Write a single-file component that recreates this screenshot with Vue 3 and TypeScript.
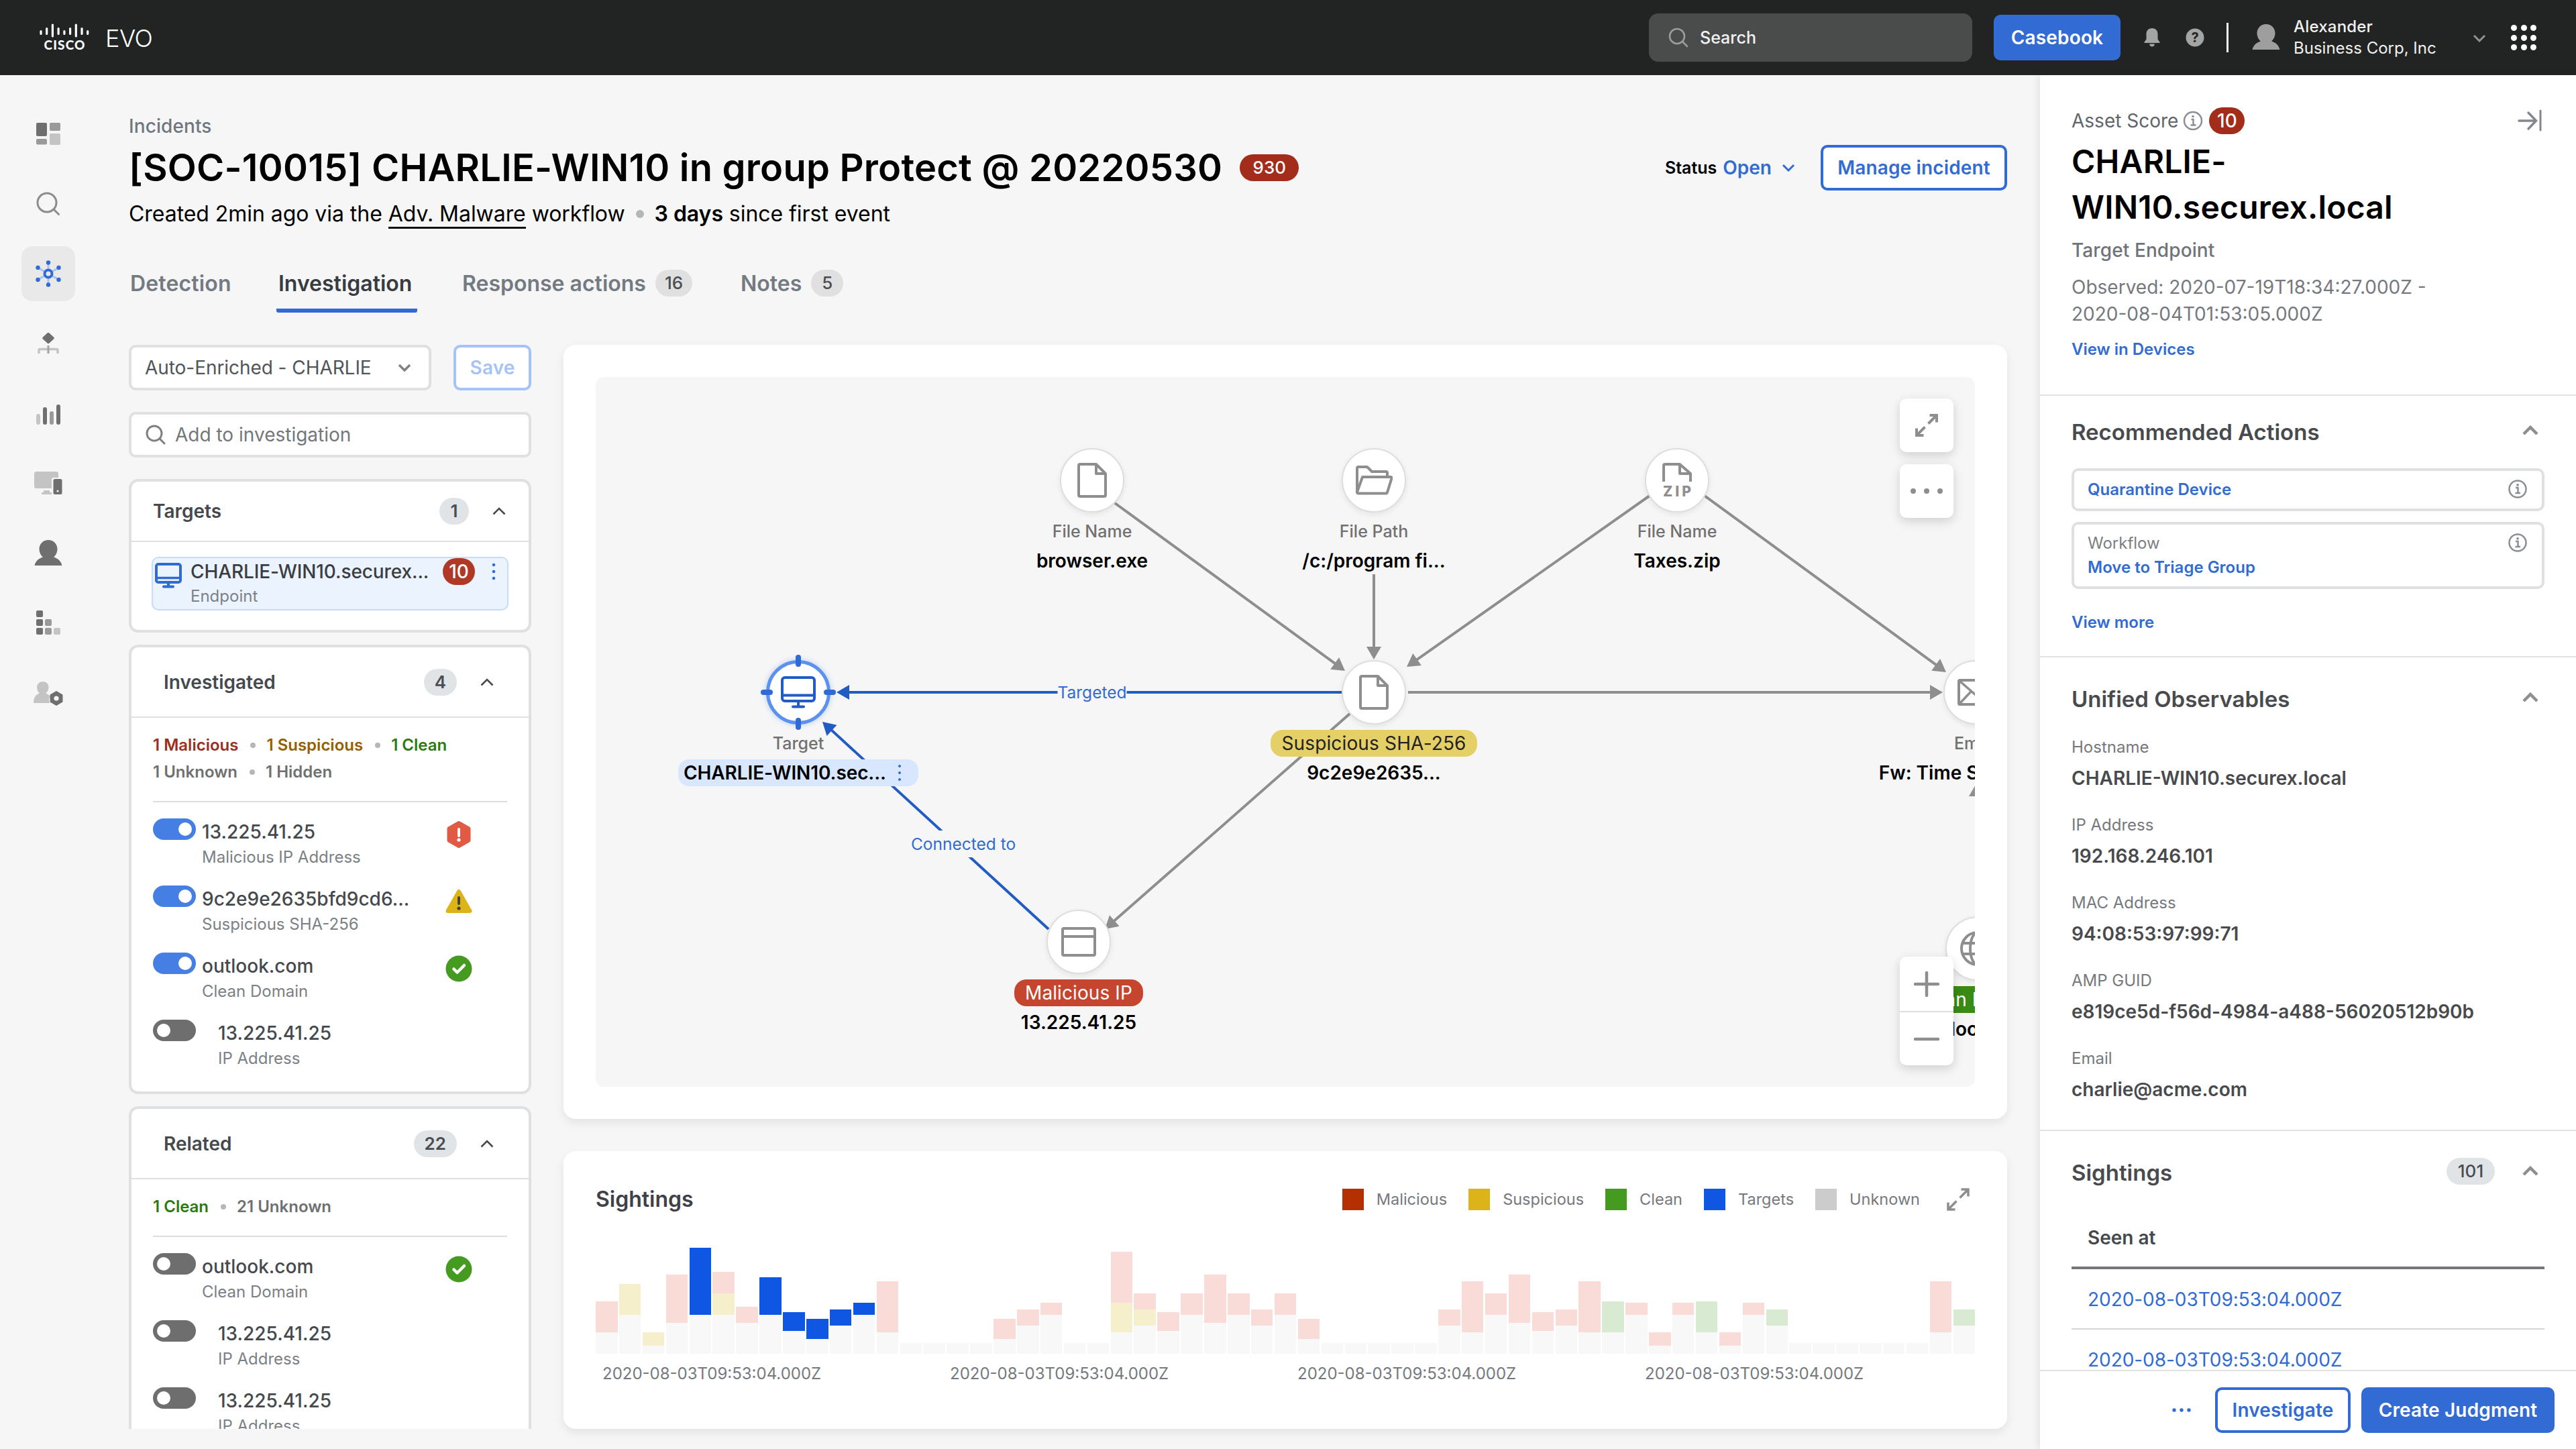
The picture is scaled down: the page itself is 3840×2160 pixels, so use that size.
<script setup lang="ts">
type Tone = 'malicious' | 'suspicious' | 'clean' | 'unknown'

interface Observable {
  on: boolean
  value: string
  kind: string
  verdict?: Tone
}

interface Segment {
  color: string
  size: number
}

interface GraphNode {
  id: string
  x: number
  y: number
  icon: string
  label: string
  name: string
  pill?: Tone
}

interface Edge {
  x1: number
  y1: number
  x2: number
  y2: number
  color: string
}

const tabs = [
  { label: 'Detection', cls: 't-detection' },
  { label: 'Investigation', cls: 't-investigation', active: true },
  { label: 'Response actions', cls: 't-response', count: 16 },
  { label: 'Notes', cls: 't-notes', count: 5 },
]

const investigated: Observable[] = [
  { on: true, value: '13.225.41.25', kind: 'Malicious IP Address', verdict: 'malicious' },
  { on: true, value: '9c2e9e2635bfd9cd6...', kind: 'Suspicious SHA-256', verdict: 'suspicious' },
  { on: true, value: 'outlook.com', kind: 'Clean Domain', verdict: 'clean' },
  { on: false, value: '13.225.41.25', kind: 'IP Address' },
]

const related: Observable[] = [
  { on: false, value: 'outlook.com', kind: 'Clean Domain', verdict: 'clean' },
  { on: false, value: '13.225.41.25', kind: 'IP Address' },
  { on: false, value: '13.225.41.25', kind: 'IP Address' },
]

const groups: { title: string; count: number; stats: { text: string; tone: Tone }[][]; items: Observable[] }[] = [
  {
    title: 'Investigated',
    count: 4,
    stats: [
      [
        { text: '1 Malicious', tone: 'malicious' },
        { text: '1 Suspicious', tone: 'suspicious' },
        { text: '1 Clean', tone: 'clean' },
      ],
      [
        { text: '1 Unknown', tone: 'unknown' },
        { text: '1 Hidden', tone: 'unknown' },
      ],
    ],
    items: investigated,
  },
  {
    title: 'Related',
    count: 22,
    stats: [
      [
        { text: '1 Clean', tone: 'clean' },
        { text: '21 Unknown', tone: 'unknown' },
      ],
    ],
    items: related,
  },
]

/* Graph coordinates are relative to the canvas corner. */
const nodes: GraphNode[] = [
  { id: 'browser', x: 740, y: 154, icon: 'file', label: 'File Name', name: 'browser.exe' },
  { id: 'path', x: 1160, y: 154, icon: 'folder', label: 'File Path', name: '/c:/program fi...' },
  { id: 'zip', x: 1612, y: 154, icon: 'zip', label: 'File Name', name: 'Taxes.zip' },
  { id: 'sha', x: 1160, y: 470, icon: 'file', label: 'Suspicious SHA-256', name: '9c2e9e2635...', pill: 'suspicious' },
  { id: 'email', x: 2057, y: 470, icon: 'mail', label: 'Email', name: 'Fw: Time Sensitive...' },
  { id: 'ip', x: 720, y: 842, icon: 'window', label: 'Malicious IP', name: '13.225.41.25', pill: 'malicious' },
  { id: 'domain', x: 2060, y: 852, icon: 'globe', label: 'Clean Domain', name: 'outlook.com', pill: 'clean' },
]

const GRAY = '#8e8e8e'
const BLUE = '#215bc4'
const edges: Edge[] = [
  { x1: 774, y1: 188, x2: 1117, y2: 438, color: GRAY },
  { x1: 1160, y1: 294, x2: 1160, y2: 421, color: GRAY },
  { x1: 1571, y1: 177, x2: 1209, y2: 432, color: GRAY },
  { x1: 1653, y1: 177, x2: 2013, y2: 440, color: GRAY },
  { x1: 1211, y1: 470, x2: 2008, y2: 470, color: GRAY },
  { x1: 1124, y1: 502, x2: 759, y2: 823, color: GRAY },
  { x1: 2058, y1: 800, x2: 2058, y2: 606, color: GRAY },
  { x1: 1113, y1: 470, x2: 359, y2: 470, color: BLUE },
  { x1: 675, y1: 823, x2: 338, y2: 514, color: BLUE },
]

function head(e: Edge): string {
  const len = Math.hypot(e.x2 - e.x1, e.y2 - e.y1)
  const ux = (e.x2 - e.x1) / len
  const uy = (e.y2 - e.y1) / len
  const bx = e.x2 - ux * 19
  const by = e.y2 - uy * 19
  return `${e.x2},${e.y2} ${bx - uy * 11},${by + ux * 11} ${bx + uy * 11},${by - ux * 11}`
}

function shaftEnd(e: Edge): { x: number; y: number } {
  const len = Math.hypot(e.x2 - e.x1, e.y2 - e.y1)
  return { x: e.x2 - ((e.x2 - e.x1) / len) * 15, y: e.y2 - ((e.y2 - e.y1) / len) * 15 }
}

/* Each column: base height, then coloured segments stacked on it. */
const R = '#f9dcd7'
const Y = '#f6efcb'
const G = '#d9ead3'
const B = '#0f56e3'
const flat = (n: number): number[][] => Array.from({ length: n }, () => [16])
const raw: (number | string)[][] = [
  [32, R, 46], [58, Y, 46], [12, Y, 20], [46, R, 72], [58, B, 100], [58, Y, 32, R, 32],
  [46, R, 24], [58, B, 56], [34, B, 28], [22, B, 30], [42, B, 24], [58, B, 18], [32, R, 76],
  ...flat(4),
  [22, R, 30], [42, R, 24], [58, R, 18],
  ...flat(2),
  [32, Y, 44, R, 76], [42, Y, 24, R, 24], [34, R, 28], [58, R, 32], [46, R, 72], [58, R, 32],
  [42, R, 24], [58, R, 32], [22, R, 30],
  ...flat(5),
  [42, R, 24], [32, R, 76], [58, R, 32], [46, R, 72], [34, R, 28], [42, R, 24], [32, R, 76],
  [32, G, 46], [58, R, 18], [12, R, 20], [58, R, 18], [32, G, 46], [12, R, 20], [58, R, 18], [42, G, 24],
  ...flat(6),
  [32, R, 76], [42, G, 24],
]
const bars: Segment[][] = raw.map((col) => {
  const out: Segment[] = [{ color: '#f8f8f8', size: col[0] as number }]
  for (let i = 1; i < col.length; i += 2) {
    out.push({ color: col[i] as string, size: col[i + 1] as number })
  }
  return out
})

const legend = [
  { label: 'Malicious', color: '#b53000' },
  { label: 'Suspicious', color: '#dcb41a' },
  { label: 'Clean', color: '#459a20' },
  { label: 'Targets', color: '#0f56e3' },
  { label: 'Unknown', color: '#cccccc' },
]

const stamp = '2020-08-03T09:53:04.000Z'

const observables = [
  { k: 'Hostname', v: 'CHARLIE-WIN10.securex.local' },
  { k: 'IP Address', v: '192.168.246.101' },
  { k: 'MAC Address', v: '94:08:53:97:99:71' },
  { k: 'AMP GUID', v: 'e819ce5d-f56d-4984-a488-56020512b90b' },
  { k: 'Email', v: 'charlie@acme.com' },
]
</script>

<template>
  <div class="app">
    <header class="topbar">
      <svg class="logo" width="74" height="42" viewBox="0 0 74 42">
        <g stroke="#fff" stroke-width="3.2" stroke-linecap="round">
          <path d="M2 11.500v4M10.700 7.500v8M19.400 2v17M28.100 7.500v8M36.900 11.500v4M45.600 7.500v8M54.300 2v17M63 7.500v8M71.700 11.500v4" />
        </g>
        <text x="6.500" y="39" textLength="61" font-family="Lato, sans-serif" font-weight="900" font-size="19" fill="#fff">CISCO</text>
      </svg>
      <span class="brand">EVO</span>
      <div class="search">
        <svg width="30" height="30" viewBox="0 0 30 30" fill="none" stroke="#9a9b9a" stroke-width="2.600" stroke-linecap="round">
          <circle cx="13" cy="13" r="11" /><path d="M21 21l7 7" />
        </svg>
        <span>Search</span>
      </div>
      <button class="btn solid casebook">Casebook</button>
      <svg class="bell" width="24" height="28" viewBox="0 0 24 28" fill="#a3a4a3">
        <path d="M12 0c5 0 8.500 3.500 8.500 8.500v8l3 4.200V22H.5v-1.300l3-4.200v-8C3.500 3.500 7 0 12 0z" />
        <path d="M8 23.500h8c-.3 2.500-2 4-4 4s-3.700-1.500-4-4z" />
      </svg>
      <svg class="help" width="28" height="28" viewBox="0 0 28 28">
        <circle cx="14" cy="14" r="13.500" fill="#a3a4a3" />
        <text x="14" y="21" text-anchor="middle" font-family="Inter, sans-serif" font-weight="700" font-size="20" fill="#232524">?</text>
      </svg>
      <i class="sep"></i>
      <svg class="avatar" width="42" height="38" viewBox="0 0 42 38" fill="#9d9e9d">
        <path d="M21 0c8 0 13.500 6 13.500 13.500 0 5-2.500 9.500-5.500 12 6.500 2 11 6 12.500 12.500H.5C2 31.500 6.500 27.500 13 25.500c-3-2.500-5.500-7-5.500-12C7.500 6 13 0 21 0z" />
      </svg>
      <div class="user"><span class="u1">Alexander</span><span class="u2">Business Corp, Inc</span></div>
      <svg class="uchev" width="20" height="12" viewBox="0 0 20 12" fill="none" stroke="#8f908f" stroke-width="3"><path d="M2 2l8 8 8-8" /></svg>
      <div class="apps"><i v-for="n in 9" :key="n"></i></div>
    </header>

    <div class="body">
      <nav class="rail">
        <div class="ri">
          <svg width="36" height="34" viewBox="0 0 36 34">
            <rect width="16" height="20" rx="2" fill="#6f6f6f" /><rect x="20" width="16" height="12" rx="2" fill="#9a9a9a" />
            <rect y="24" width="16" height="8.500" rx="2" fill="#9a9a9a" /><rect x="20" y="16" width="16" height="17" rx="2" fill="#c4c4c4" />
          </svg>
        </div>
        <div class="ri">
          <svg width="36" height="36" viewBox="0 0 36 36" fill="none" stroke="#8c8c8c" stroke-width="3" stroke-linecap="round">
            <circle cx="16" cy="16" r="14" /><path d="M26.500 26.500l7 7" />
          </svg>
        </div>
        <div class="ri on">
          <svg width="38" height="40" viewBox="0 0 38 40">
            <path d="M19 3v34M4 11.500l30 17M34 11.500l-30 17" stroke="#a9c2ee" stroke-width="3" />
            <g fill="#2f6bd3"><circle cx="19" cy="3.500" r="3.200" /><circle cx="19" cy="36.500" r="3.200" /><circle cx="3.500" cy="11" r="3.200" /><circle cx="34.500" cy="11" r="3.200" /><circle cx="3.500" cy="29" r="3.200" /><circle cx="34.500" cy="29" r="3.200" /></g>
            <circle cx="19" cy="20" r="5.500" fill="#e9e9e9" stroke="#2f6bd3" stroke-width="4" />
          </svg>
        </div>
        <div class="ri">
          <svg width="34" height="34" viewBox="0 0 34 34">
            <path d="M15.500 1.500q1.500-1.500 3 0l6.500 6q1.500 1.500 0 3l-6.500 6q-1.500 1.500-3 0l-6.500-6q-1.500-1.500 0-3z" fill="#6f6f6f" />
            <path d="M3 32v-5q0-1.500 1.500-1.500h25q1.500 0 1.500 1.500v5" fill="none" stroke="#c4c4c4" stroke-width="3.500" /><path d="M17 20v12" stroke="#a5a5a5" stroke-width="3" />
          </svg>
        </div>
        <div class="ri lower">
          <svg width="36" height="32" viewBox="0 0 36 32" stroke-width="6" stroke-linecap="round">
            <path d="M3 18v10" stroke="#c4c4c4" /><path d="M13 8v20" stroke="#6f6f6f" /><path d="M23 14v14" stroke="#9a9a9a" /><path d="M33 4v24" stroke="#6f6f6f" />
          </svg>
        </div>
        <div class="ri">
          <svg width="42" height="36" viewBox="0 0 42 36">
            <path d="M3 1h30a3 3 0 013 3v6h-7a3 3 0 00-3 3v13H3a3 3 0 01-3-3V4a3 3 0 013-3zM14 29h9v3h3v3H11v-3h3z" fill="#c4c4c4" />
            <rect x="28.500" y="12" width="13" height="23" rx="2.500" fill="#6f6f6f" /><circle cx="35" cy="30" r="1.500" fill="#fff" />
          </svg>
        </div>
        <div class="ri">
          <svg width="42" height="38" viewBox="0 0 42 38" fill="#6f6f6f">
            <path d="M21 0c8 0 13.500 6 13.500 13.500 0 5-2.500 9.500-5.500 12 6.500 2 11 6 12.500 12.500H.5C2 31.500 6.500 27.500 13 25.500c-3-2.500-5.500-7-5.500-12C7.500 6 13 0 21 0z" />
          </svg>
        </div>
        <div class="ri">
          <svg width="36" height="36" viewBox="0 0 36 36">
            <g fill="#6f6f6f"><rect width="10" height="10" rx="2" /><rect y="13" width="10" height="10" rx="2" /><rect y="26" width="10" height="10" rx="2" /></g>
            <g fill="#9a9a9a"><rect x="13" y="13" width="10" height="10" rx="2" /><rect x="13" y="26" width="10" height="10" rx="2" /></g>
            <rect x="26" y="26" width="10" height="10" rx="2" fill="#c4c4c4" />
          </svg>
        </div>
        <div class="ri lower">
          <svg width="44" height="36" viewBox="0 0 44 36">
            <path d="M14 0c5.500 0 8.500 4 8.500 8.500S20 16 18 17.500c3 1 5 2.500 6.500 4.500q-3 6 0 10H0c0-8 3-12.500 9-14.500-2-1.500-4-4.500-4-9S8.500 0 14 0z" fill="#c4c4c4" />
            <path d="M34 15l8.500 5v10L34 35l-8.500-5V20z" fill="#6f6f6f" stroke="#6f6f6f" stroke-width="2" stroke-linejoin="round" /><circle cx="34" cy="25" r="3.600" fill="#f6f6f6" />
          </svg>
        </div>
      </nav>

      <main class="main">
        <div class="crumb">Incidents</div>
        <div class="titlerow">
          <h1>[SOC-10015] CHARLIE-WIN10 in group Protect @ 20220530</h1>
          <span class="score">930</span>
          <span class="status">Status</span>
          <span class="open">Open</span>
          <svg class="ochev" width="20" height="12" viewBox="0 0 20 12" fill="none" stroke="#316bd3" stroke-width="3"><path d="M2 2l8 8 8-8" /></svg>
          <button class="btn line manage">Manage incident</button>
        </div>
        <div class="sub">
          <span>Created 2min ago via the <u>Adv. Malware</u> workflow</span><i></i><span><b>3 days</b> since first event</span>
        </div>
        <div class="tabs">
          <div v-for="t in tabs" :key="t.label" class="tab" :class="[t.cls, { active: t.active }]">
            <span>{{ t.label }}</span><em v-if="t.count">{{ t.count }}</em>
          </div>
        </div>

        <div class="content">
          <section class="left">
            <div class="controls">
              <div class="select"><span>Auto-Enriched - CHARLIE</span>
                <svg width="20" height="12" viewBox="0 0 20 12" fill="none" stroke="#808080" stroke-width="3.500"><path d="M2 2l8 8 8-8" /></svg>
              </div>
              <button class="btn save">Save</button>
            </div>
            <div class="add">
              <svg width="30" height="30" viewBox="0 0 30 30" fill="none" stroke="#808080" stroke-width="3" stroke-linecap="round"><circle cx="13" cy="13" r="11" /><path d="M21 21l7 7" /></svg>
              <span>Add to investigation</span>
            </div>

            <div class="card targets">
              <div class="chead">
                <h3>Targets</h3><em class="cnt">1</em>
                <svg width="20" height="12" viewBox="0 0 20 12" fill="none" stroke="#45494d" stroke-width="2.600"><path d="M1.500 10.500L10 2l8.500 8.500" /></svg>
              </div>
              <div class="target">
                <svg class="mon" width="40" height="38" viewBox="0 0 40 38" fill="none" stroke="#2f6bd3"><rect x="2" y="2" width="36" height="27" rx="3" stroke-width="4" /><path d="M2 22.500h36" stroke-width="3.500" /><path d="M20 30v5M13 35.500h14" stroke-width="4" stroke-linecap="round" /></svg>
                <div class="tt"><span class="tv">CHARLIE-WIN10.securex...</span><span class="tk">Endpoint</span></div>
                <span class="ten">10</span>
                <svg class="kebab" width="6" height="26" viewBox="0 0 6 26" fill="#316bd3"><circle cx="3" cy="3" r="2.300" /><circle cx="3" cy="13" r="2.300" /><circle cx="3" cy="23" r="2.300" /></svg>
              </div>
            </div>

            <div v-for="g in groups" :key="g.title" class="card group">
              <div class="chead">
                <h3>{{ g.title }}</h3><em class="cnt">{{ g.count }}</em>
                <svg width="20" height="12" viewBox="0 0 20 12" fill="none" stroke="#45494d" stroke-width="2.600"><path d="M1.500 10.500L10 2l8.500 8.500" /></svg>
              </div>
              <div class="gbody">
                <div v-for="(row, ri) in g.stats" :key="ri" class="stats">
                  <span v-for="s in row" :key="s.text" :class="s.tone">{{ s.text }}</span>
                </div>
                <hr />
                <div v-for="(o, i) in g.items" :key="i" class="obs" :class="{ plain: !o.verdict }">
                  <i class="toggle" :class="{ on: o.on }"></i>
                  <div class="ot"><span class="ov">{{ o.value }}</span><span class="ok">{{ o.kind }}</span></div>
                  <svg v-if="o.verdict === 'malicious'" width="40" height="40" viewBox="0 0 40 40">
                    <path d="M20 2.500l15 8.500v18L20 37.500 5 29V11z" fill="#e05a44" stroke="#e05a44" stroke-width="5" stroke-linejoin="round" />
                    <path d="M20 12v10" stroke="#fff" stroke-width="4" stroke-linecap="round" /><circle cx="20" cy="28" r="2.600" fill="#fff" />
                  </svg>
                  <svg v-else-if="o.verdict === 'suspicious'" width="40" height="40" viewBox="0 0 40 40">
                    <path d="M20 5l16.500 29h-33z" fill="#dcb41a" stroke="#dcb41a" stroke-width="6" stroke-linejoin="round" />
                    <path d="M20 14v9" stroke="#44423a" stroke-width="4" stroke-linecap="round" /><circle cx="20" cy="30" r="2.600" fill="#44423a" />
                  </svg>
                  <svg v-else-if="o.verdict === 'clean'" width="40" height="40" viewBox="0 0 40 40">
                    <circle cx="20" cy="20" r="19.500" fill="#459a20" /><path d="M12.500 20.500l5 5L28 15" fill="none" stroke="#fff" stroke-width="4.500" stroke-linecap="round" stroke-linejoin="round" />
                  </svg>
                </div>
              </div>
            </div>
          </section>

          <section class="center">
            <div class="panel graph">
              <div class="canvas">
                <svg class="edges" width="2056" height="1058" viewBox="0 0 2056 1058">
                  <g v-for="(e, i) in edges" :key="i">
                    <line :x1="e.x1" :y1="e.y1" :x2="shaftEnd(e).x" :y2="shaftEnd(e).y" :stroke="e.color" stroke-width="4" />
                    <polygon :points="head(e)" :fill="e.color" />
                  </g>
                </svg>
                <span class="elabel targeted">Targeted</span>
                <span class="elabel connected">Connected to</span>

                <div v-for="n in nodes" :key="n.id" class="node" :class="n.id" :style="{ left: n.x + 'px', top: n.y + 'px' }">
                  <div class="disc">
                    <svg v-if="n.icon === 'file'" width="44" height="52" viewBox="0 0 44 52" fill="none" stroke="#8e8e8e" stroke-width="4" stroke-linejoin="round"><path d="M4 2h24l14 14v32a2 2 0 01-2 2H4a2 2 0 01-2-2V4a2 2 0 012-2z" /><path d="M28 2v14h14" /></svg>
                    <svg v-else-if="n.icon === 'folder'" width="56" height="44" viewBox="0 0 56 44" fill="none" stroke="#8e8e8e" stroke-width="4" stroke-linejoin="round"><path d="M3 40V4a2 2 0 012-2h13l7 7h21a2 2 0 012 2v6" /><path d="M11 17h42a1.500 1.500 0 011.500 2L48 40a2 2 0 01-2 1.500H4.500a1.500 1.500 0 01-1.500-2z" /></svg>
                    <svg v-else-if="n.icon === 'zip'" width="48" height="52" viewBox="0 0 48 52" fill="none" stroke="#8e8e8e" stroke-width="4" stroke-linejoin="round"><path d="M4 28V4a2 2 0 012-2h22l16 14v12" /><path d="M28 2v14h16" /><text x="3" y="50" textLength="42" font-family="Inter, sans-serif" font-weight="800" font-size="21" fill="#8e8e8e" stroke="none">ZIP</text></svg>
                    <svg v-else-if="n.icon === 'mail'" width="54" height="40" viewBox="0 0 54 40" fill="none" stroke="#8e8e8e" stroke-width="4" stroke-linejoin="round"><rect x="2" y="2" width="50" height="36" rx="1.500" /><path d="M3 3l24 21L51 3M3 37l17-18M51 37L34 19" stroke-width="3.500" /></svg>
                    <svg v-else-if="n.icon === 'window'" width="52" height="44" viewBox="0 0 52 44" fill="none" stroke="#8e8e8e" stroke-width="4" stroke-linejoin="round"><rect x="2" y="2" width="48" height="40" rx="2" /><path d="M2 14h48" /></svg>
                    <svg v-else width="54" height="54" viewBox="0 0 54 54" fill="none" stroke="#8e8e8e" stroke-width="4"><circle cx="27" cy="27" r="24" /><ellipse cx="27" cy="27" rx="11" ry="24" /><path d="M5 19h44M5 35h44" /></svg>
                  </div>
                  <span class="nl" :class="n.pill">{{ n.label }}</span>
                  <span class="nn">{{ n.name }}</span>
                </div>

                <div class="node tgt">
                  <div class="disc">
                    <svg width="52" height="48" viewBox="0 0 52 48" fill="none" stroke="#215bc4" stroke-width="4"><rect x="2" y="2" width="48" height="35" rx="4" /><path d="M2 28.500h48" /><path d="M26 38v6M18 45.500h16" stroke-linecap="round" /></svg>
                    <i class="tick n"></i><i class="tick s"></i><i class="tick e"></i><i class="tick w"></i>
                  </div>
                  <span class="nl">Target</span>
                  <span class="sel"><span>CHARLIE-WIN10.sec...</span>
                    <svg width="6" height="26" viewBox="0 0 6 26" fill="#316bd3"><circle cx="3" cy="3" r="2" /><circle cx="3" cy="13" r="2" /><circle cx="3" cy="23" r="2" /></svg>
                  </span>
                </div>

                <div class="tool expand">
                  <svg width="36" height="36" viewBox="0 0 36 36" fill="none" stroke="#8e8e8e" stroke-width="4"><path d="M22.500 3H33v10.500M33 3L20.500 15.500M3 22.500V33h10.500M3 33l12.500-12.500" /></svg>
                </div>
                <div class="tool more"><i></i><i></i><i></i></div>
                <div class="zoom">
                  <div><svg width="40" height="40" viewBox="0 0 40 40" stroke="#8e8e8e" stroke-width="4.500" stroke-linecap="round"><path d="M3 20h34M20 3v34" /></svg></div>
                  <div><svg width="40" height="40" viewBox="0 0 40 40" stroke="#8e8e8e" stroke-width="4.500" stroke-linecap="round"><path d="M3 20h34" /></svg></div>
                </div>
              </div>
            </div>

            <div class="panel sight">
              <div class="shead">
                <h2>Sightings</h2>
                <div class="legend">
                  <div v-for="l in legend" :key="l.label" class="lg"><i :style="{ background: l.color }"></i><span>{{ l.label }}</span></div>
                </div>
                <svg width="36" height="36" viewBox="0 0 36 36" fill="none" stroke="#8e8e8e" stroke-width="3.500"><path d="M22.500 3H33v10.500M33 3L20.500 15.500M3 22.500V33h10.500M3 33l12.500-12.500" /></svg>
              </div>
              <div class="bars">
                <div v-for="(b, i) in bars" :key="i" class="bar">
                  <i v-for="(s, j) in b" :key="j" :style="{ height: s.size + 'px', background: s.color }"></i>
                </div>
              </div>
              <div class="axis"><span v-for="n in 4" :key="n">{{ stamp }}</span></div>
            </div>
          </section>
        </div>
      </main>

      <aside class="side">
        <div class="scroll">
          <section class="s1">
            <div class="asset">
              <span>Asset Score</span>
              <svg width="30" height="30" viewBox="0 0 30 30" fill="none" stroke="#8b8f94" stroke-width="2.500"><circle cx="15" cy="15" r="13" /><path d="M12.500 13h3v8.500M11.500 21.500h8" /><circle cx="15" cy="8.500" r="1.800" fill="#8b8f94" stroke="none" /></svg>
              <em>10</em>
              <svg class="collapse" width="36" height="34" viewBox="0 0 36 34" fill="none" stroke="#84888e" stroke-width="3.500" stroke-linecap="round"><path d="M2 17h24M16 5l11.500 12L16 29" /><path d="M34 2v29" stroke-width="3" /></svg>
            </div>
            <h2 class="host">CHARLIE-<br /><span>WIN10.securex.local</span></h2>
            <div class="te">Target Endpoint</div>
            <div class="ob">Observed: 2020-07-19T18:34:27.000Z -<br />2020-08-04T01:53:05.000Z</div>
            <a class="link">View in Devices</a>
          </section>

          <section class="s2">
            <div class="sh"><h4 class="ra">Recommended Actions</h4><svg width="24" height="15" viewBox="0 0 24 15" fill="none" stroke="#8e8e8e" stroke-width="4.500"><path d="M2 13l10-10 10 10" /></svg></div>
            <div class="act a1"><div><a class="link qd">Quarantine Device</a></div>
              <svg width="28" height="28" viewBox="0 0 28 28" fill="none" stroke="#8b8f94" stroke-width="2.500"><circle cx="14" cy="14" r="12.500" /><path d="M11 12h3.500v8M10.500 20h7.500" /><circle cx="14" cy="7.800" r="1.900" fill="#8b8f94" stroke="none" /></svg>
            </div>
            <div class="act a2"><div><span class="wf">Workflow</span><a class="link mt">Move to Triage Group</a></div>
              <svg width="28" height="28" viewBox="0 0 28 28" fill="none" stroke="#8b8f94" stroke-width="2.500"><circle cx="14" cy="14" r="12.500" /><path d="M11 12h3.500v8M10.500 20h7.500" /><circle cx="14" cy="7.800" r="1.900" fill="#8b8f94" stroke="none" /></svg>
            </div>
            <a class="link vm">View more</a>
          </section>

          <section class="s3">
            <div class="sh"><h4 class="uo">Unified Observables</h4><svg width="24" height="15" viewBox="0 0 24 15" fill="none" stroke="#8e8e8e" stroke-width="4.500"><path d="M2 13l10-10 10 10" /></svg></div>
            <div v-for="o in observables" :key="o.k" class="kv"><span>{{ o.k }}</span><b>{{ o.v }}</b></div>
          </section>

          <section class="s4">
            <div class="sh"><h4 class="si">Sightings</h4><em class="cnt">101</em><svg width="24" height="15" viewBox="0 0 24 15" fill="none" stroke="#8e8e8e" stroke-width="4.500"><path d="M2 13l10-10 10 10" /></svg></div>
            <div class="th">Seen at</div>
            <div class="td">{{ stamp }}</div>
            <div class="td">{{ stamp }}</div>
          </section>
        </div>
        <footer class="foot">
          <svg width="28" height="6" viewBox="0 0 28 6" fill="#316bd3"><circle cx="3" cy="3" r="2.700" /><circle cx="14" cy="3" r="2.700" /><circle cx="25" cy="3" r="2.700" /></svg>
          <button class="btn line inv">Investigate</button>
          <button class="btn solid judge">Create Judgment</button>
        </footer>
      </aside>
    </div>
  </div>
</template>

<style>
body {
  margin: 0;
  background: #f6f6f6;
}
</style>

<style scoped>
.app {
  width: 3840px;
  height: 2160px;
  overflow: hidden;
  display: flex;
  flex-direction: column;
  background: #f6f6f6;
  font-family: Inter, "Liberation Sans", sans-serif;
  color: #000;
}
.app * {
  box-sizing: border-box;
}
.app svg {
  display: block;
  flex: none;
}
.app h1, .app h2, .app h3, .app h4 {
  margin: 0;
  font-weight: 600;
}
.app em, .app i {
  font-style: normal;
}
.app span, .app h1, .app h2, .app h3, .app h4, .app a, .app b {
  white-space: nowrap;
}

.topbar {
  height: 112px;
  flex: none;
  background: #222423;
  display: flex;
  align-items: center;
}
.logo { margin-left: 59px; }
.brand {
  margin-left: 24px;
  width: 2301px;
  font-size: 36px;
  font-weight: 300;
  color: #fff;
  line-height: 44px;
  letter-spacing: -0.5px;
  padding-top: 2px;
}
.search {
  width: 482px;
  height: 72px;
  border-radius: 14px;
  background: #4a4c4b;
  display: flex;
  align-items: center;
  gap: 17px;
  padding-left: 29px;
  color: #f2f2f2;
  font-size: 25px;
  font-weight: 500;
}
.btn {
  height: 68px;
  border-radius: 10px;
  font: 600 28px/60px Inter, sans-serif;
  letter-spacing: 0.15px;
  padding: 0;
  text-align: center;
  white-space: nowrap;
  flex: none;
}
.btn.solid { background: #316bd3; color: #fff; border: 4px solid #316bd3; }
.btn.line { background: #fff; color: #316bd3; border: 4px solid #316bd3; }
.casebook { width: 189px; margin-left: 32px; }
.bell { margin-left: 35px; }
.help { margin-left: 38px; }
.sep { width: 3px; height: 44px; background: #f4f4f4; margin-left: 33px; }
.avatar { margin-left: 35px; margin-top: -2px; }
.user {
  margin-left: 20px;
  width: 267px;
  display: flex;
  flex-direction: column;
  color: #f0f0f0;
  font-size: 24px;
  line-height: 32px;
}
.u1 { font-weight: 500; letter-spacing: 0.2px; }
.uchev { margin-top: 2px; }
.apps {
  margin-left: 37px;
  width: 38px;
  display: grid;
  grid-template-columns: repeat(3, 9px);
  gap: 5.5px;
}
.apps i { width: 9px; height: 9px; border-radius: 50%; background: #fff; }

.body { flex: 1; display: flex; min-height: 0; }
.rail {
  width: 192px;
  flex: none;
  padding: 47px 0 0 32px;
  display: flex;
  flex-direction: column;
  gap: 22px;
}
.ri {
  width: 80px;
  height: 82px;
  border-radius: 16px;
  display: flex;
  align-items: center;
  justify-content: center;
}
.ri.on { background: #e9e9e9; }
.ri.lower { padding-top: 4px; }

.main { width: 2800px; flex: none; display: flex; flex-direction: column; }
.crumb {
  margin-top: 56px;
  font-size: 28px;
  font-weight: 500;
  line-height: 40px;
  color: #6f7680;
  letter-spacing: 0.1px;
}
.titlerow { margin-top: 8px; height: 68px; display: flex; align-items: center; }
h1 { font-size: 56px; line-height: 68px; letter-spacing: 0.24px; }
.score {
  margin-left: 26px;
  width: 88px;
  height: 40px;
  border-radius: 20px;
  background: #a32c1b;
  color: #fff;
  font-size: 26px;
  font-weight: 500;
  line-height: 40px;
  text-align: center;
}
.status { margin-left: auto; font-size: 25px; font-weight: 600; }
.open { margin-left: 9px; font-size: 28px; font-weight: 600; color: #316bd3; }
.ochev { margin-left: 15px; }
.manage { width: 278px; margin-left: 38px; }
.sub {
  margin-top: 15px;
  display: flex;
  align-items: center;
  font-size: 32px;
  line-height: 40px;
  letter-spacing: -0.05px;
}
.sub u { text-decoration: none; border-bottom: 3px solid #111; }
.sub i { width: 12px; height: 12px; border-radius: 50%; background: #b6b6b6; margin: 0 16px 0 16px; }
.sub b { font-weight: 600; }
.tabs { margin-top: 63px; height: 64px; display: flex; padding-left: 2px; }
.tab {
  display: flex;
  height: 64px;
  align-items: flex-start;
  font-size: 32px;
  font-weight: 600;
  line-height: 42px;
  color: #747a82;
}
.tab em {
  margin-left: 14px;
  min-width: 48px;
  padding: 0 14px;
  height: 40px;
  border-radius: 20px;
  background: #e0e0e0;
  color: #4a4e53;
  font-size: 26px;
  line-height: 40px;
  font-weight: 500;
  text-align: center;
}
.t-detection { width: 218px; letter-spacing: 0.15px; }
.t-investigation { width: 210px; padding-left: 3px; color: #373c42; border-bottom: 6px solid #2f6bd3; border-radius: 0 0 3px 3px; }
.t-response { margin-left: 67px; width: 415px; }

.content { margin-top: 48px; height: 1616px; display: flex; gap: 48px; }
.left { width: 600px; flex: none; height: 1616px; overflow: hidden; display: flex; flex-direction: column; }
.left > * { flex: none; }
.controls { display: flex; justify-content: space-between; }
.select {
  width: 451px;
  height: 68px;
  border: 4px solid #e0e0e0;
  border-radius: 10px;
  background: #fff;
  display: flex;
  align-items: center;
  justify-content: space-between;
  padding: 0 26px 0 20px;
  font-size: 28px;
  letter-spacing: -0.06px;
  color: #50555a;
}
.btn.save { width: 116px; background: #fff; border: 4px solid #a5c3f6; color: #a5c3f6; }
.add {
  margin-top: 32px;
  height: 68px;
  border: 4px solid #e0e0e0;
  border-radius: 10px;
  background: #fff;
  display: flex;
  align-items: center;
  gap: 14px;
  padding-left: 21px;
  font-size: 28px;
  color: #73777b;
}
.card {
  margin-top: 18px;
  background: #fff;
  border: 4px solid #dfe0e1;
  border-radius: 14px;
}
.targets { margin-top: 32px; padding-bottom: 29px; }
.chead { display: flex; align-items: center; height: 105px; padding: 0 52px 0 48px; border-bottom: 2px solid #dfe0e1; }
.targets .chead { height: 90px; padding: 0 34px 0 32px; }
.chead h3 { font-size: 28px; line-height: 40px; color: #45494d; flex: 1; }
.chead svg { margin-left: 35px; }
.cnt {
  height: 40px;
  min-width: 44px;
  padding: 0 16px;
  border-radius: 20px;
  background: #e1e4e7;
  color: #4a4e53;
  font-size: 26px;
  line-height: 40px;
  font-weight: 600;
  text-align: center;
}
.target {
  margin: 22px 30px 0 30px;
  height: 80px;
  border: 2px solid #c5dcfa;
  border-radius: 10px;
  background: #ebf3fe;
  display: flex;
}
.mon { margin: 7px 0 0 3px; }
.tt { margin-left: 13px; width: 376px; display: flex; flex-direction: column; }
.tv { font-size: 28px; line-height: 40px; font-weight: 500; color: #3a3d41; letter-spacing: -0.1px; }
.tk { font-size: 24px; line-height: 33px; color: #7b8188; }
.ten {
  width: 48px;
  height: 40px;
  border-radius: 20px;
  background: #b03826;
  color: #fff;
  font-size: 28px;
  line-height: 40px;
  font-weight: 500;
  text-align: center;
}
.kebab { margin: 7px 0 0 25px; }
.gbody { padding: 20px 32px 7px 32px; }
.stats { display: flex; height: 40px; line-height: 42px; font-size: 24px; font-weight: 600; }
.stats span + span::before {
  content: "";
  display: inline-block;
  width: 8px;
  height: 8px;
  border-radius: 50%;
  background: #b6b6b6;
  margin: 0 16px 4px 18px;
}
.stats .malicious { color: #9c2d1f; }
.stats .suspicious { color: #946000; }
.stats .clean { color: #2b7a0e; }
.stats .unknown { color: #6f7072; }
hr { margin: 24px 0 24px; height: 2px; border: 0; background: #dcdddd; }
.obs { display: flex; height: 100px; }
.toggle { width: 64px; height: 32px; border-radius: 16px; background: #6e6e6e; padding: 6px; flex: none; display: flex; }
.toggle::before { content: ""; width: 20px; height: 20px; border-radius: 50%; background: #fff; }
.toggle.on { background: #457fe3; justify-content: flex-end; }
.ot { margin-left: 9px; width: 363px; display: flex; flex-direction: column; }
.obs.plain .ot { margin-left: 33px; }
.ov { font-size: 28px; line-height: 40px; font-weight: 500; color: #45494d; }
.ok { font-size: 24px; line-height: 35px; color: #7b8085; }
.obs svg { margin-top: 4px; }

.center { width: 2152px; flex: none; }
.panel { background: #fff; border-radius: 18px; box-shadow: 0 6px 14px rgba(0, 0, 0, 0.08); }
.graph { height: 1154px; padding: 48px; }
.canvas { position: relative; width: 2056px; height: 1058px; background: #f6f6f6; border-radius: 12px; overflow: hidden; }
.edges { position: absolute; left: 0; top: 0; }
.elabel { position: absolute; background: #f6f6f6; color: #316bd3; font-size: 24.5px; line-height: 40px; transform: translate(-50%, -50%); }
.targeted { left: 740px; top: 470px; }
.connected { left: 548px; top: 696px; padding: 0 4px; }
.node { position: absolute; width: 400px; margin: -48px 0 0 -200px; display: flex; flex-direction: column; align-items: center; }
.disc {
  position: relative;
  width: 96px;
  height: 96px;
  border-radius: 50%;
  background: #fff;
  border: 2px solid #dedede;
  box-shadow: 0 3px 8px rgba(0, 0, 0, 0.08);
  display: flex;
  align-items: center;
  justify-content: center;
}
.nl { margin-top: 8px; height: 40px; line-height: 40px; font-size: 25px; font-weight: 500; color: #717171; }
.nl.suspicious, .nl.malicious, .nl.clean { padding: 0 16px; border-radius: 18px; font-size: 28px; font-weight: 400; }
.nl.suspicious { background: #e5d068; color: #222; letter-spacing: 0.15px; }
.nl.malicious { background: #c5452f; color: #fff; letter-spacing: 0.1px; }
.nl.clean { background: #3a8a16; color: #fff; }
.nn { margin-top: 4px; height: 40px; line-height: 41px; font-size: 28px; font-weight: 600; color: #000; }
.email .nn { padding-right: 7px; }
.browser .nl, .path .nl, .zip .nl { line-height: 41px; }
.tgt { left: 302px; top: 470px; }
.tgt .disc { border: 5px solid #5b92ef; box-shadow: 0 0 8px rgba(60, 120, 230, 0.35); }
.tick { position: absolute; background: #2f6bd3; border-radius: 4px; }
.tick.n, .tick.s { width: 8px; height: 18px; left: 39px; }
.tick.n { top: -13px; }
.tick.s { bottom: -13px; }
.tick.e, .tick.w { width: 18px; height: 8px; top: 39px; }
.tick.e { right: -13px; }
.tick.w { left: -13px; }
.sel {
  margin-top: 4px;
  width: 358px;
  height: 40px;
  border-radius: 16px;
  background: #d9e7fe;
  display: flex;
  align-items: center;
  justify-content: space-between;
  padding: 0 25px 0 8px;
  font-size: 28px;
  font-weight: 600;
  letter-spacing: -0.1px;
}
.tool, .zoom {
  position: absolute;
  left: 1944px;
  width: 80px;
  background: #fff;
  border-radius: 10px;
  box-shadow: 0 5px 16px rgba(0, 0, 0, 0.16);
}
.tool { height: 80px; display: flex; align-items: center; justify-content: center; }
.expand { top: 32px; }
.more { top: 130px; gap: 12px; }
.more i { width: 8px; height: 8px; border-radius: 50%; background: #8e8e8e; }
.zoom { top: 864px; height: 162px; }
.zoom div { height: 81px; display: flex; align-items: center; justify-content: center; }
.zoom div + div { border-top: 2px solid #dedede; }

.sight { margin-top: 48px; height: 414px; padding: 48px 48px 0; }
.shead { display: flex; align-items: center; height: 48px; }
.shead h2 { font-size: 32px; line-height: 50px; color: #3e4145; flex: 1; }
.legend { display: flex; gap: 32px; margin-right: 39px; }
.lg { display: flex; align-items: center; gap: 19px; font-size: 23.5px; line-height: 32px; color: #75797e; }
.lg i { width: 32px; height: 32px; }
.shead svg { margin-right: 7px; }
.bars { margin-top: 48px; height: 158px; display: flex; gap: 2.4px; align-items: flex-end; }
.bar { flex: 1; display: flex; flex-direction: column-reverse; }
.bar i { display: block; }
.axis { margin-top: 9px; display: flex; padding-left: 10px; }
.axis span { flex: none; width: 518px; font-size: 24px; line-height: 42px; color: #75797e; }
.axis span:last-child { width: auto; }

.side {
  margin-left: 49px;
  width: 799px;
  flex: none;
  height: 2048px;
  background: #fff;
  box-shadow: -3px 0 10px rgba(0, 0, 0, 0.08);
  display: flex;
  flex-direction: column;
}
.scroll { height: 1930px; overflow: hidden; flex: none; }
.scroll section { padding-left: 47px; padding-right: 48px; border-bottom: 2px solid #e1e2e3; }
.s1 { height: 478px; padding-top: 48px; }
.asset { display: flex; align-items: center; height: 40px; font-size: 28px; color: #60656b; }
.asset svg { margin-left: 7px; }
.asset em {
  margin-left: 9px;
  width: 53px;
  height: 40px;
  border-radius: 20px;
  background: #a32c1b;
  color: #fff;
  line-height: 40px;
  text-align: center;
  font-weight: 500;
}
.asset .collapse { margin-left: auto; margin-right: 3px; }
.host { margin-top: 7px !important; font-size: 48px; line-height: 68px; letter-spacing: 0.2px; }
.te { margin-top: 10px; font-size: 28px; font-weight: 500; line-height: 40px; color: #6f747a; letter-spacing: 0.1px; }
.ob { margin-top: 15px; font-size: 28px; line-height: 40px; color: #75797e; white-space: nowrap; }
.link { display: block; font-size: 24px; font-weight: 600; line-height: 40px; color: #316bd3; }
.s1 .link { margin-top: 13px; }
.s2 { height: 390px; padding-top: 34px; }
.sh { display: flex; align-items: center; height: 40px; }
.sh h4 { font-size: 33px; line-height: 40px; color: #484a4d; flex: 1; }
.sh svg { margin-right: 8px; margin-top: -6px; }
.act {
  margin-right: -1px;
  border: 4px solid #dfe0e1;
  border-radius: 10px;
  display: flex;
  justify-content: space-between;
  padding: 0 22px 0 20px;
}
.a1 { margin-top: 34px; height: 64px; }
.a1 .link { line-height: 56px; }
.a2 { margin-top: 16px; height: 100px; }
.a2 .link { line-height: 36px; }
.wf { display: block; margin-top: 10px; font-size: 24px; line-height: 36px; color: #7b7f84; }
.act svg { margin-top: 13px; }
.vm { margin-top: 30px; }
.s3 { height: 706px; padding-top: 42px; }
.s3 .sh { margin-bottom: 34px; }
.kv { height: 116px; display: flex; flex-direction: column; }
.kv span { font-size: 24px; line-height: 36px; color: #75797e; }
.kv b { margin-top: 8px; font-size: 28px; font-weight: 600; line-height: 40px; color: #484a4d; }
.s4 { padding-top: 42px; }
.s4 .sh .cnt { font-weight: 500; margin-right: 41px; margin-top: -4px; min-width: 72px; padding: 0; }
.th {
  margin: 37px -1px 0 0;
  padding: 20px 24px 0;
  height: 87px;
  border-bottom: 4px solid #73777c;
  font-size: 28px;
  font-weight: 600;
  line-height: 40px;
  color: #45494d;
}
.td {
  margin: 0 -1px 0 0;
  padding: 0 24px;
  height: 90px;
  border-bottom: 2px solid #d4d6d8;
  font-size: 28px;
  line-height: 90px;
  letter-spacing: -0.05px;
  color: #316bd3;
}
.foot {
  height: 118px;
  border-top: 2px solid #e1e2e3;
  padding: 24px 32px 0 0;
  display: flex;
  justify-content: flex-end;
  align-items: flex-start;
}
.foot svg { margin: 31px 36px 0 0; }
.inv { width: 202px; margin-right: 16px; }
.judge { width: 288px; }
</style>
